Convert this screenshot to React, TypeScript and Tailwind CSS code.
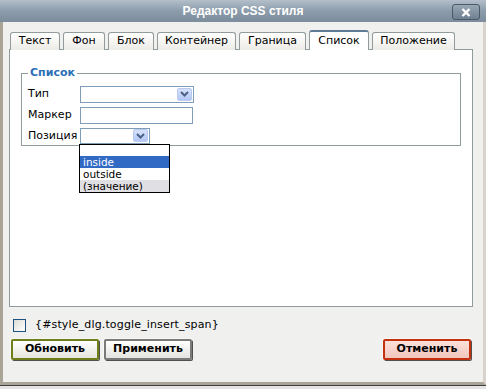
import { useState } from "react";

const tabs: [string, string][] = [
  ["Текст", "w-[50px]"],
  ["Фон", "w-[42px]"],
  ["Блок", "w-[46px]"],
  ["Контейнер", "w-[79px]"],
  ["Граница", "w-[67px]"],
  ["Список", "w-[60px]"],
  ["Положение", "w-[83px]"],
];

function Arrow() {
  return (
    <span className="ml-auto mr-[1px] flex h-[13px] w-[15px] items-center justify-center rounded-[2px] border border-[#b9c9ef] bg-gradient-to-b from-[#d6e2fb] to-[#b4c8f6]">
      <svg width="9" height="6" viewBox="0 0 9 6">
        <path d="M1 1 L4.5 4.5 L8 1" fill="none" stroke="#4d6185" strokeWidth="2" />
      </svg>
    </span>
  );
}

function Btn({ label, tone }: { label: string; tone: "green" | "gray" | "red" }) {
  const border =
    tone === "green"
      ? "border-[#6e7f1a] bg-gradient-to-b from-[#ffffff] to-[#e6e6dc]"
      : tone === "red"
        ? "border-[#c2300e] bg-gradient-to-b from-[#fbe0da] to-[#f2c6bd]"
        : "border-[#7a7a7a] bg-gradient-to-b from-[#ffffff] to-[#e4e4e0]";
  return (
    <div className="rounded-[2px] bg-[#f7f7f5] p-[1px]">
      <div
        className={`flex h-[21px] w-[88px] items-center justify-center rounded-[2px] border-2 ${border} text-[11px] font-bold text-black shadow-[1px_1px_0_#505050]`}
      >
        {label}
      </div>
    </div>
  );
}

export default function App() {
  const [checked, setChecked] = useState(false);
  return (
    <div
      className="flex h-[389px] w-[486px] flex-col overflow-hidden bg-[#f0f0ee] text-[11px] text-black"
      style={{ fontFamily: '"DejaVu Sans", Verdana, sans-serif' }}
    >
      {/* title bar */}
      <div className="relative flex h-[22px] shrink-0 items-center justify-center bg-gradient-to-b from-[#b3bfca] via-[#8c9cab] to-[#7b8c9c]">
        <span
          className="text-[12px] font-bold text-white"
          style={{ fontFamily: '"Liberation Sans", Arial, sans-serif' }}
        >
          Редактор CSS стиля
        </span>
        <div className="absolute right-[6px] top-[4px] flex h-[16px] w-[28px] items-center justify-center rounded-[3px] border border-[#4c5864] bg-gradient-to-b from-[#9aa8b5] to-[#6f8090]">
          <svg width="10" height="9" viewBox="0 0 10 9">
            <path d="M1.5 1 L8.5 8 M8.5 1 L1.5 8" stroke="white" strokeWidth="2.4" />
          </svg>
        </div>
      </div>

      <div className="flex flex-1 border-b-[3px] border-l-[3px] border-r-[3px] border-l-[#a9a398] border-r-[#d8d4cc] border-b-[#a9a398]">
        <div className="flex flex-1 flex-col pl-[6px] pr-[10px] pt-[8px]">
          {/* tabs */}
          <div className="relative z-10 flex h-[20px] items-end gap-[3px] pl-[1px]">
            {tabs.map(([t, w]) => {
              const active = t === "Список";
              return (
                <div
                  key={t}
                  className={
                    active
                      ? `flex h-[20px] ${w} items-center justify-center rounded-t-[3px] border border-b-0 border-t-2 border-[#919b9c] border-t-[#5e7a96] bg-white text-[11px]`
                      : `flex h-[18px] ${w} items-center justify-center rounded-t-[3px] border border-b-0 border-[#919b9c] bg-gradient-to-b from-[#ffffff] to-[#ecebe6] text-[11px]`
                  }
                >
                  {t}
                </div>
              );
            })}
          </div>

          {/* panel */}
          <div className="-mt-px h-[258px] border border-[#919b9c] bg-white px-[11px] pt-[15px]">
            <fieldset className="h-[81px] border border-[#919b9c] px-[6px]">
              <legend className="px-[2px] text-[11px] font-bold text-[#2b6fb6]">Список</legend>
              <div className="flex flex-col gap-[4px] pt-[4px]">
                <div className="flex items-center">
                  <span className="w-[52px]">Тип</span>
                  <div className="flex h-[17px] w-[114px] items-center border border-[#7f9db9] bg-white">
                    <Arrow />
                  </div>
                </div>
                <div className="flex items-center">
                  <span className="w-[52px]">Маркер</span>
                  <div className="h-[17px] w-[113px] border border-[#7f9db9] bg-white" />
                </div>
                <div className="relative flex items-center">
                  <span className="w-[52px]">Позиция</span>
                  <div className="flex h-[16px] w-[70px] items-center border border-[#7f9db9] bg-white">
                    <Arrow />
                  </div>
                  <div className="absolute left-[51px] top-[16px] w-[91px] border border-black bg-white text-[10.5px] leading-[12px]">
                    <div className="h-[11px]" />
                    <div className="h-[12px] bg-[#316ac5] pl-[3px] text-white">inside</div>
                    <div className="h-[12px] pl-[3px]">outside</div>
                    <div className="h-[12px] bg-[#e0dfe3] pl-[3px]">(значение)</div>
                  </div>
                </div>
              </div>
            </fieldset>
          </div>

          {/* bottom */}
          <div className="mt-[10px] flex items-center gap-[9px] pl-[4px]">
            <button
              onClick={() => setChecked(!checked)}
              className="h-[13px] w-[13px] border border-[#1c5180] bg-gradient-to-br from-[#dcdcd6] to-[#ffffff]"
            />
            <span className="text-[11px] tracking-[0.15px]">{"{#style_dlg.toggle_insert_span}"}</span>
          </div>
          <div className="mt-[4px] flex items-center pl-[1px]">
            <Btn label="Обновить" tone="green" />
            <div className="ml-[3px]">
              <Btn label="Применить" tone="gray" />
            </div>
            <div className="ml-auto mr-[1px]">
              <Btn label="Отменить" tone="red" />
            </div>
          </div>
        </div>
      </div>
      <div className="h-[4px] shrink-0 border-t border-[#404040] bg-[#e4e4e4]" />
    </div>
  );
}
